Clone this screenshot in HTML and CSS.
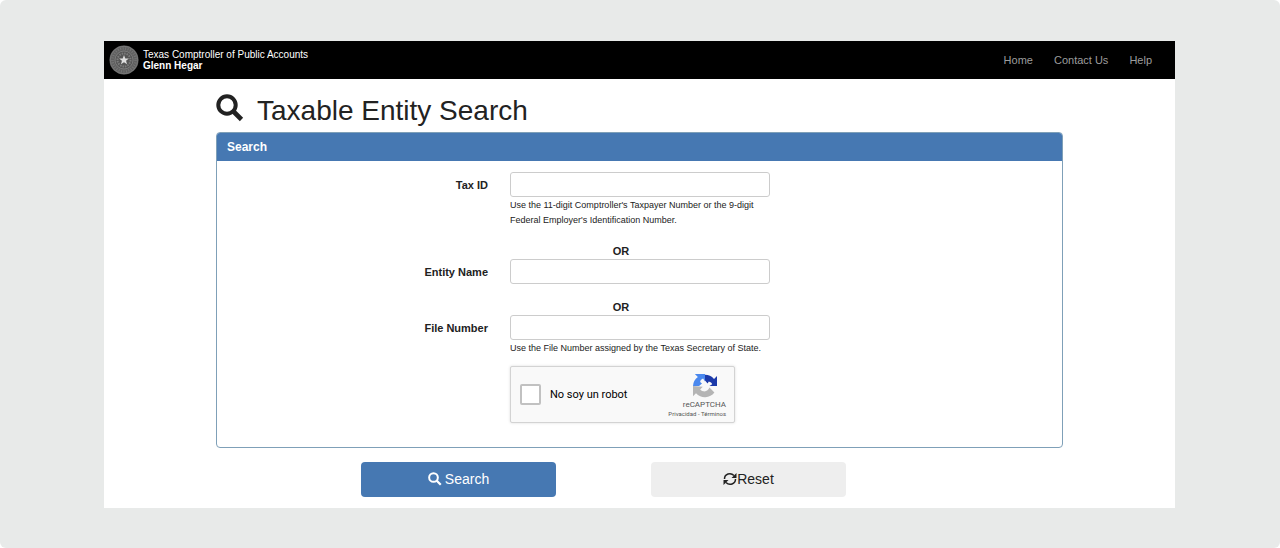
FILE: index.html
```html
<!DOCTYPE html>
<html lang="en">
<head>
<meta charset="utf-8">
<meta name="viewport" content="width=device-width, initial-scale=1">
<title>Taxable Entity Search</title>
<link rel="stylesheet" href="styles.css">
</head>
<body>
<div class="backdrop">
  <div class="page">
    <header class="navbar">
      <div class="brand">
        <svg class="seal" viewBox="0 0 60 60" aria-hidden="true">
          <circle cx="30" cy="30" r="29" fill="#606060"/>
          <circle cx="30" cy="30" r="27.5" fill="none" stroke="#808080" stroke-width="1.5"/>
          <circle cx="30" cy="30" r="23" fill="none" stroke="#a0a0a0" stroke-width="5" stroke-dasharray="2 3" opacity=".35"/>
          <circle cx="30" cy="30" r="18" fill="#555" stroke="#858585" stroke-width="1.5"/>
          <circle cx="30" cy="30" r="13" fill="none" stroke="#7c7c7c" stroke-width="4" stroke-dasharray="3 2"/>
          <path fill="#dedede" d="M30 20l2.600 6.800 7.200.3-5.700 4.500 2 7L30 34.600l-6.100 4 2-7-5.700-4.500 7.200-.3z"/>
        </svg>
        <div class="brand-text">Texas Comptroller of Public Accounts<br><strong>Glenn Hegar</strong></div>
      </div>
      <nav class="links">
        <a href="#home">Home</a>
        <a href="#contact">Contact Us</a>
        <a href="#help">Help</a>
      </nav>
    </header>
    <main class="content">
      <h1 class="title">
        <svg class="title-icon" viewBox="0 0 28 28" aria-hidden="true"><circle cx="11" cy="11" r="8.700" fill="none" stroke="currentColor" stroke-width="4"/><path d="M17 17l8.500 8.500" stroke="currentColor" stroke-width="4.600"/></svg>
        <span>Taxable Entity Search</span>
      </h1>
      <form>
        <section class="panel">
          <h2 class="panel-heading">Search</h2>
          <div class="fields">
            <label class="label" for="tax-id">Tax ID</label>
            <input class="input" id="tax-id" type="text" aria-describedby="tax-help">
            <p class="help" id="tax-help">Use the 11-digit Comptroller's Taxpayer Number or the 9-digit Federal Employer's Identification Number.</p>
            <p class="or">OR</p>
            <label class="label" for="entity">Entity Name</label>
            <input class="input" id="entity" type="text">
            <p class="or">OR</p>
            <label class="label" for="file">File Number</label>
            <input class="input" id="file" type="text" aria-describedby="file-help">
            <p class="help" id="file-help">Use the File Number assigned by the Texas Secretary of State.</p>
            <div class="captcha">
              <input class="captcha-box" id="robot" type="checkbox">
              <label class="captcha-label" for="robot">No soy un robot</label>
              <div class="captcha-brand">
                <svg class="captcha-logo" viewBox="0 0 64 64" aria-hidden="true">
                  <path fill="#1c3aa9" d="M64 32V5l-8 8A32 32 0 0 0 32 2v15l7 8 3-5c5 1 8 4 9 7l-7 5z"/>
                  <path fill="#4a88ee" d="M32 0H5l8 8A31 31 0 0 0 0 32h16l8-7-5-4c1-5 4-8 8-9l5 8z"/>
                  <path fill="#b5b5b5" d="M0 32v27l8-8a31 31 0 0 0 49-2L44 36c-3 7-9 12-17 10-4-1-6-3-8-5l7-7z"/>
                </svg>
                <span class="captcha-name">reCAPTCHA</span>
                <span class="captcha-terms"><a href="#privacy">Privacidad</a> - <a href="#terms">Términos</a></span>
              </div>
            </div>
          </div>
        </section>
        <div class="actions">
          <button class="button primary" type="submit"><svg class="button-icon" viewBox="0 0 28 28" aria-hidden="true"><circle cx="11" cy="11" r="8.700" fill="none" stroke="currentColor" stroke-width="4"/><path d="M17 17l8.500 8.500" stroke="currentColor" stroke-width="4.600"/></svg>Search</button>
          <button class="button secondary" type="reset"><svg class="button-icon" viewBox="0 0 28 28" aria-hidden="true"><path d="M3 14C3 4 15 0 22 7M25 14c0 10-12 14-19 7" fill="none" stroke="currentColor" stroke-width="3"/><path d="M27 2v10H17zM1 26V16h10z" fill="currentColor"/></svg>Reset</button>
        </div>
      </form>
    </main>
  </div>
</div>
</body>
</html>
```
FILE: styles.css
```css
* {
  box-sizing: border-box;
}

body {
  margin: 0;
  background: #fff;
  color: #222;
  font-family: "Liberation Sans", Arial, sans-serif;
  font-size: 11px;
}

h1, h2, p {
  margin: 0;
}

a {
  color: inherit;
  text-decoration: none;
}

.backdrop {
  min-height: 100vh;
  padding: 41px 105px 40px 104px;
  border-radius: 6px;
  background: #e8eae9;
}

.page {
  background: #fff;
  padding-bottom: 11px;
}

.navbar {
  display: flex;
  align-items: center;
  justify-content: space-between;
  padding: 4px 23px 4px 5px;
  background: #000;
}

.brand {
  display: flex;
  align-items: center;
  gap: 4px;
  color: #fff;
}

.seal {
  width: 30px;
  height: 30px;
}

.brand-text {
  font-size: 10px;
  line-height: 11px;
}

.links {
  display: flex;
  gap: 21px;
  color: #9d9d9d;
}

.content {
  padding: 15px 112px 0;
}

.title {
  display: flex;
  align-items: center;
  gap: 13px;
  margin-bottom: 4px;
  font-size: 28px;
  font-weight: 400;
  line-height: 34px;
}

.title-icon {
  width: 28px;
  height: 28px;
  margin-bottom: 6px;
}

.panel {
  overflow: hidden;
  border: 1px solid #7fa0b8;
  border-radius: 4px;
}

.panel-heading {
  padding: 0 10px;
  background: #4678b2;
  color: #fff;
  font-size: 12px;
  line-height: 28px;
}

.fields {
  display: grid;
  grid-template-columns: 271fr 260fr 270fr;
  column-gap: 22px;
  align-items: center;
  padding: 11px 0 24px;
}

.label {
  grid-column: 1;
  text-align: right;
  font-weight: 700;
}

.input {
  grid-column: 2;
  width: 100%;
  height: 25px;
  padding: 0 8px;
  border: 1px solid #ccc;
  border-radius: 3px;
  background: #fff;
  font: inherit;
}

.help {
  grid-column: 2;
  padding-top: 1px;
  font-size: 9px;
  line-height: 15px;
}

.or {
  grid-column: 2;
  padding: 16px 38px 0 0;
  font-weight: 700;
  line-height: 15px;
  text-align: center;
}

.captcha {
  grid-column: 2;
  display: flex;
  align-items: center;
  width: 225px;
  margin-top: 10px;
  padding: 4px 8px 4px 9px;
  border: 1px solid #d3d3d3;
  border-radius: 2px;
  background: #f9f9f9;
  box-shadow: 0 0 3px #ddd;
  font-family: Roboto, sans-serif;
}

.captcha-box {
  appearance: none;
  width: 21px;
  height: 21px;
  margin: 0 9px 0 0;
  border: 2px solid #c1c1c1;
  border-radius: 2px;
  background: #fff;
}

.captcha-label {
  color: #000;
}

.captcha-brand {
  display: flex;
  flex-direction: column;
  align-items: flex-end;
  margin-left: auto;
  color: #555;
}

.captcha-logo {
  width: 24px;
  height: 24px;
  margin: 3px 9px 2px 0;
}

.captcha-name {
  font-size: 8px;
  line-height: 10px;
}

.captcha-terms {
  font-size: 6px;
  line-height: 8px;
}

.actions {
  display: grid;
  grid-template-columns: 195fr 195fr;
  gap: 95px;
  margin: 14px 217px 0 145px;
}

.button {
  display: flex;
  align-items: center;
  justify-content: center;
  height: 35px;
  padding: 0 0 1px;
  border: 0;
  border-radius: 4px;
  font: inherit;
  font-size: 14px;
}

.primary {
  gap: 3px;
  background: #4678b2;
  color: #fff;
}

.secondary {
  background: #eee;
  color: #222;
}

.button-icon {
  width: 14px;
  height: 14px;
}
```
